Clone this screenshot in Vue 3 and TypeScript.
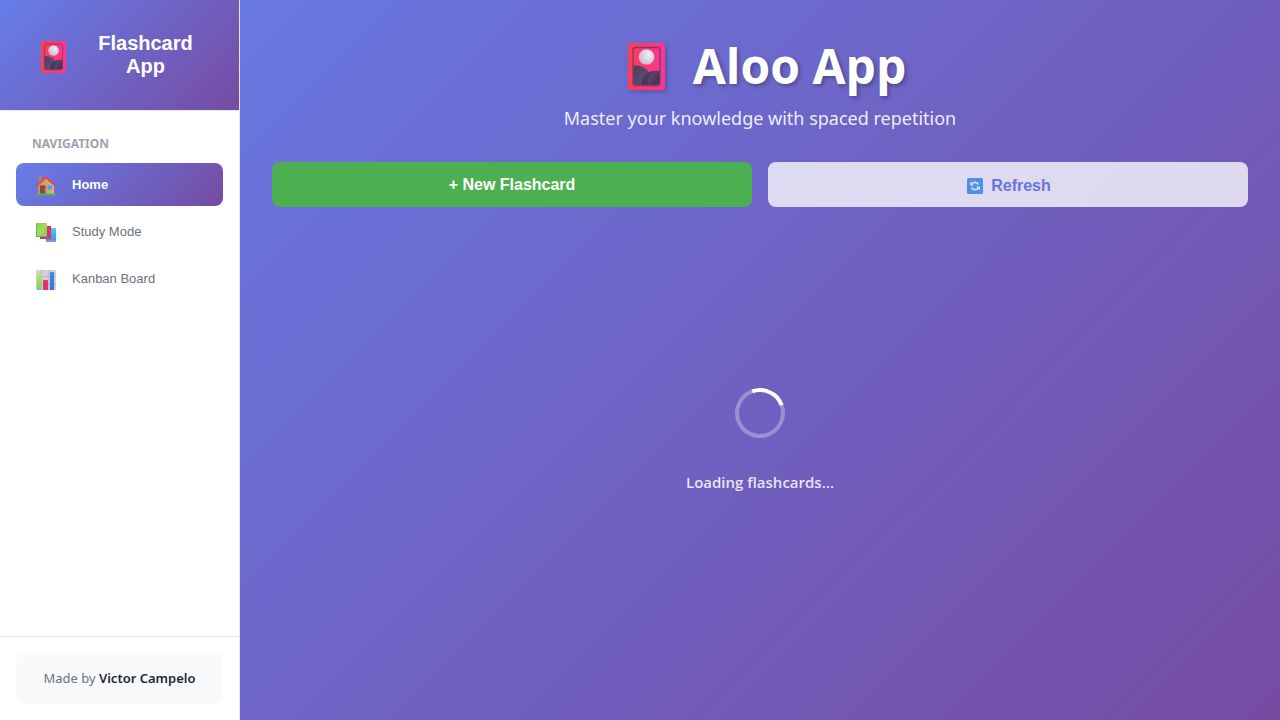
<script setup lang="ts">
import { ref } from 'vue'

interface NavItem {
  id: string
  label: string
}

const items: NavItem[] = [
  { id: 'home', label: 'Home' },
  { id: 'study', label: 'Study Mode' },
  { id: 'kanban', label: 'Kanban Board' },
]
const active = ref<string>('home')
</script>

<template>
  <div class="app">
    <svg class="defs" aria-hidden="true">
      <defs>
        <linearGradient id="frame" x1="0" x2="1" y1="0" y2="0">
          <stop offset="0" stop-color="#fb4050" />
          <stop offset="0.5" stop-color="#fd3677" />
          <stop offset="1" stop-color="#fc3596" />
        </linearGradient>
        <radialGradient id="moon" cx="0.65" cy="0.35" r="0.75">
          <stop offset="0" stop-color="#f2eff4" />
          <stop offset="1" stop-color="#c4b5ca" />
        </radialGradient>
        <linearGradient id="hill" x1="0" x2="1" y1="0" y2="0.5">
          <stop offset="0" stop-color="#4c3a61" />
          <stop offset="0.6" stop-color="#5e4d73" />
          <stop offset="1" stop-color="#463453" />
        </linearGradient>
        <clipPath id="cardclip"><rect x="5" y="5" width="27" height="37" rx="3" /></clipPath>
        <symbol id="card" viewBox="0 0 37 47">
          <rect width="37" height="47" rx="3" fill="url(#frame)" />
          <g clip-path="url(#cardclip)">
            <path d="M4 23c8-2 14 2 17 6 4-2 8-1 12-1v16H4z" fill="url(#hill)" />
            <path d="M13 43c0-9 5-14 12-14-4 3-6 8-5 14z" fill="#49375e" />
          </g>
          <rect x="5" y="4.500" width="27" height="38" rx="2.500" fill="none" stroke="#7e3c64" stroke-width="1.300" />
          <circle cx="18.500" cy="14" r="7.800" fill="url(#moon)" />
        </symbol>
        <linearGradient id="wall" x1="0" x2="1"><stop offset="0" stop-color="#c98b60" /><stop offset="1" stop-color="#edb074" /></linearGradient>
        <linearGradient id="green" x1="0" x2="1" y1="0" y2="1"><stop offset="0" stop-color="#79cf58" /><stop offset="0.5" stop-color="#a6dc56" /><stop offset="1" stop-color="#7cc95a" /></linearGradient>
        <linearGradient id="blue" x1="0" x2="0" y1="0" y2="1"><stop offset="0" stop-color="#4cc9fa" /><stop offset="1" stop-color="#3e8ee0" /></linearGradient>
        <linearGradient id="bar1" x1="0" x2="0" y1="0" y2="1"><stop offset="0" stop-color="#b5ed57" /><stop offset="1" stop-color="#60d668" /></linearGradient>
        <linearGradient id="bar3" x1="0" x2="0" y1="0" y2="1"><stop offset="0" stop-color="#2f91e6" /><stop offset="1" stop-color="#3c74c9" /></linearGradient>
      </defs>
    </svg>

    <aside class="sidebar">
      <header class="brand">
        <svg class="brand-icon" aria-hidden="true"><use href="#card" /></svg>
        <h2>Flashcard App</h2>
      </header>
      <nav class="nav" aria-label="Navigation">
        <h3>NAVIGATION</h3>
        <button
          v-for="item in items"
          :key="item.id"
          type="button"
          :class="['nav-item', { active: active === item.id }]"
          @click="active = item.id"
        >
          <svg v-if="item.id === 'home'" class="nav-icon" viewBox="0 0 20 20" aria-hidden="true">
            <path d="M3 0h3v8H3z" fill="#b87e62" />
            <path d="M2 9l8-7 8 7v9H2z" fill="url(#wall)" />
            <path d="M10 0.500L0 9.300l1.200 1.300 8.800-7.800 8.800 7.800 1.200-1.300z" fill="#e8483d" />
            <rect x="4" y="9.500" width="5.500" height="8.500" fill="#7d5047" />
            <rect x="8" y="13" width="1" height="1" fill="#d39a65" />
            <rect x="11.500" y="9.500" width="4.500" height="4" fill="#36aaf0" />
            <rect y="17.500" width="20" height="2" rx="0.500" fill="#43b65f" />
          </svg>
          <svg v-else-if="item.id === 'study'" class="nav-icon" viewBox="0 0 20 20" aria-hidden="true">
            <rect x="10" y="5" width="10" height="14" rx="0.500" fill="url(#blue)" />
            <path d="M10 17h10v2H10z" fill="#7d94d0" />
            <path d="M5 3h10v11l-2 2H4z" fill="#e22d63" />
            <path d="M4 14h10l1 2H5z" fill="#c13c79" />
            <rect width="11" height="14" rx="0.700" fill="url(#green)" />
            <path d="M0 1h1v12h9v1H0z" fill="#6fae5c" />
          </svg>
          <svg v-else class="nav-icon" viewBox="0 0 20 20" aria-hidden="true">
            <rect width="20" height="20" rx="1.500" fill="#d5cddd" />
            <path d="M5.500 0v20M13 0v20M0 6.500h20M0 14h20" stroke="#b6acc3" stroke-width="0.800" />
            <path d="M1 20V5q0-1 1-1h2.500q1 0 1 1v15z" fill="url(#bar1)" />
            <path d="M7 20v-9q0-1 1-1h3q1 0 1 1v9z" fill="#e52f69" />
            <path d="M14 20V3q0-1 1-1h2q1 0 1 1v17z" fill="url(#bar3)" />
          </svg>
          <span>{{ item.label }}</span>
        </button>
      </nav>
      <footer class="credit">
        <p>Made by <strong>Victor Campelo</strong></p>
      </footer>
    </aside>

    <main class="main">
      <header class="hero">
        <h1><svg class="hero-icon" aria-hidden="true"><use href="#card" /></svg>Aloo App</h1>
        <p>Master your knowledge with spaced repetition</p>
      </header>
      <div class="actions">
        <button type="button" class="action create">+ New Flashcard</button>
        <button type="button" class="action refresh">
          <svg class="refresh-icon" viewBox="0 0 16 16" aria-hidden="true">
            <rect width="16" height="16" rx="1.500" fill="#4c91e6" />
            <path d="M4.500 6.200A4 4 0 0 1 11.500 6.500M11.500 9.800A4 4 0 0 1 4.500 9.500" fill="none" stroke="#d3d9f2" stroke-width="1.700" />
            <path d="M3 3.500v4h4zM13 12.500v-4H9z" fill="#d3d9f2" />
          </svg>
          <span>Refresh</span>
        </button>
      </div>
      <section class="loading" role="status">
        <div class="spinner"></div>
        <p>Loading flashcards...</p>
      </section>
    </main>
  </div>
</template>

<style>
body {
  margin: 0;
}
</style>

<style scoped>
.app {
  display: flex;
  min-height: 100vh;
  background: linear-gradient(135deg, #667eea 0%, #764ba2 100%);
  font-family: "Noto Sans", "Open Sans", sans-serif;
}
.app * {
  box-sizing: border-box;
}
.defs {
  position: absolute;
  width: 0;
  height: 0;
}
h1, h2, h3, p {
  margin: 0;
}
button {
  border: 0;
  cursor: pointer;
  font-family: "Liberation Sans", Arial, sans-serif;
}
.sidebar {
  flex: 0 0 240px;
  display: flex;
  flex-direction: column;
  background: #fff;
  border-right: 1px solid #e5e7eb;
}
.brand {
  display: flex;
  align-items: center;
  height: 111px;
  padding: 0 32px 0 41px;
  background: linear-gradient(135deg, #667eea 0%, #764ba2 100%);
  border-bottom: 1px solid #e5e7eb;
  color: #fff;
}
.brand-icon {
  flex: none;
  width: 25px;
  height: 32px;
  margin-top: 4px;
}
.brand h2 {
  flex: 1;
  margin-left: 18px;
  font: bold 20px/23px "Liberation Sans", Arial, sans-serif;
  text-align: center;
}
.nav {
  flex: 1;
  display: flex;
  flex-direction: column;
  gap: 4px;
  padding: 24px 16px;
}
.nav h3 {
  padding: 0 16px;
  margin-bottom: 6px;
  color: #9ca3af;
  font-size: 12px;
  line-height: 18px;
  font-weight: 700;
}
.nav-item {
  display: flex;
  align-items: center;
  gap: 16px;
  height: 43px;
  padding: 0 20px;
  border-radius: 8px;
  background: transparent;
  color: #6b7280;
  font-size: 13px;
  text-align: left;
}
.nav-item.active {
  background: linear-gradient(135deg, #667eea 0%, #764ba2 100%);
  color: #fff;
  font-weight: 700;
}
.nav-icon {
  width: 20px;
  height: 20px;
  margin-top: 3px;
}
.credit {
  padding: 16px;
  border-top: 1px solid #e5e7eb;
}
.credit p {
  padding: 16px;
  border-radius: 8px;
  background: #f9fafb;
  color: #6b7280;
  font-size: 13px;
  line-height: 19px;
  text-align: center;
}
.credit strong {
  color: #1f2937;
  font-weight: 600;
}
.main {
  flex: 1;
  display: flex;
  flex-direction: column;
  padding: 32px;
}
.hero {
  color: #fff;
  text-align: center;
}
.hero h1 {
  display: flex;
  align-items: center;
  justify-content: center;
  gap: 28px;
  padding-left: 14px;
  margin-bottom: 4px;
  font-family: "Open Sans", "Noto Sans", sans-serif;
  font-size: 48px;
  line-height: 68px;
  font-weight: 700;
  text-shadow: 2px 2px 4px rgba(0, 0, 0, 0.3);
}
.hero-icon {
  width: 37px;
  height: 47px;
  filter: drop-shadow(2px 2px 2px rgba(0, 0, 0, 0.2));
}
.hero p {
  color: rgba(255, 255, 255, 0.9);
  font-size: 18px;
  line-height: 28px;
}
.actions {
  display: grid;
  grid-template-columns: 1fr 1fr;
  gap: 16px;
  margin-top: 30px;
}
.action {
  display: flex;
  align-items: center;
  justify-content: center;
  gap: 8px;
  height: 45px;
  border-radius: 8px;
  font-size: 16px;
  font-weight: 700;
}
.create {
  background: #4caf50;
  color: #fff;
}
.refresh {
  padding: 2px 0 0 2px;
  background: rgba(255, 255, 255, 0.77);
  color: #6875e0;
}
.refresh-icon {
  width: 16px;
  height: 16px;
}
.loading {
  flex: 1;
  display: flex;
  flex-direction: column;
  align-items: center;
  justify-content: center;
  gap: 32px;
  padding-bottom: 14px;
}
.spinner {
  width: 50px;
  height: 50px;
  border: 4px solid rgba(255, 255, 255, 0.3);
  border-top-color: #fff;
  border-radius: 50%;
  transform: rotate(25deg);
}
.loading p {
  color: rgba(255, 255, 255, 0.85);
  font-family: "Open Sans", "Noto Sans", sans-serif;
  font-size: 15px;
  line-height: 24px;
  font-weight: 600;
}
</style>
